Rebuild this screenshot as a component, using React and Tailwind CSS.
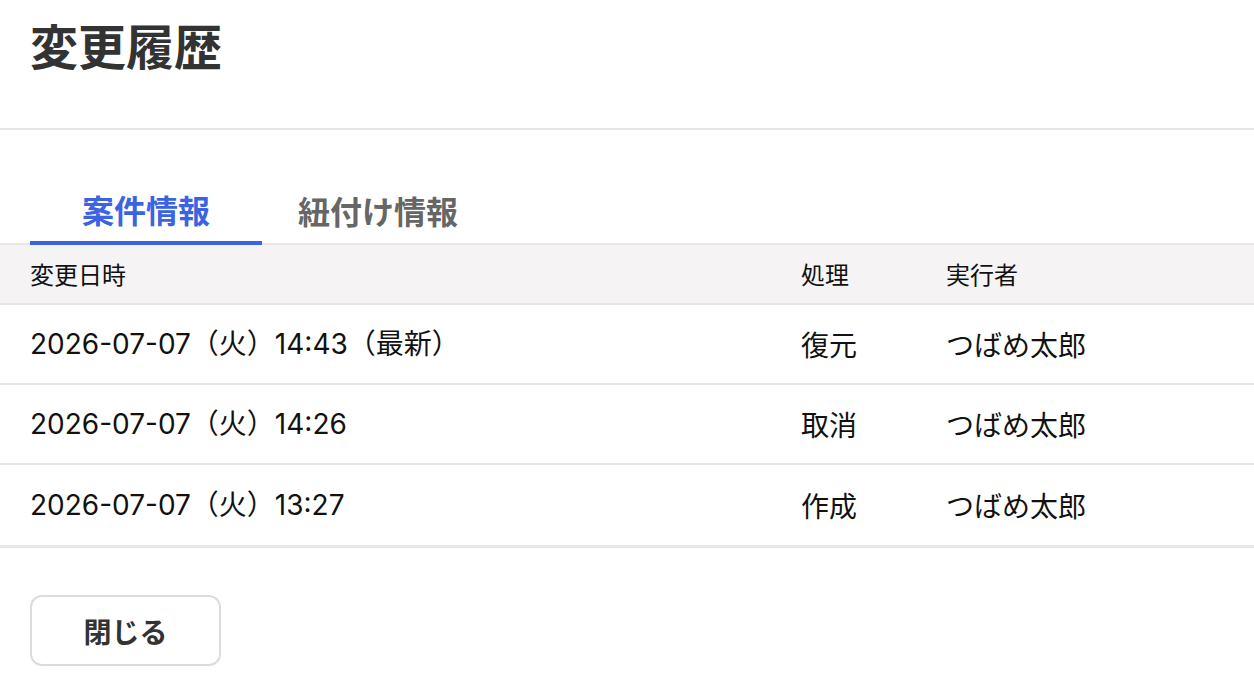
import React from "react";

const rows = [
  { date: "2026-07-07（火）14:43（最新）", action: "復元", user: "つばめ太郎" },
  { date: "2026-07-07（火）14:26", action: "取消", user: "つばめ太郎" },
  { date: "2026-07-07（火）13:27", action: "作成", user: "つばめ太郎" },
];

export default function App() {
  return (
    <div className="min-h-screen bg-white font-['Noto_Sans_CJK_JP','Noto_Sans',sans-serif]">
      <div className="h-[130px] border-b-2 border-[#e6e6e6] px-[30px] pt-[12px]">
        <h1 className="text-[48px] font-bold leading-[64px] text-[#333]">変更履歴</h1>
      </div>

      <div className="mt-[53px] flex border-b-2 border-[#e8e6e7] px-[30px]">
        <button className="-mb-[2px] w-[232px] border-b-4 border-[#3b63e3] pb-[6px] text-[32px] font-bold leading-[52px] text-[#3b63e3]">
          案件情報
        </button>
        <button className="w-[232px] pb-[6px] text-[32px] font-bold leading-[52px] text-[#666]">
          紐付け情報
        </button>
      </div>

      <div className="border-b-[3px] border-[#e6e6e6]">
        <div className="grid h-[60px] grid-cols-[771px_145px_1fr] items-center border-b-2 border-[#e6e6e6] bg-[#f5f3f4] text-[24px] text-[#111]">
          <div className="pl-[30px]">変更日時</div>
          <div className="pl-[30px]">処理</div>
          <div className="pl-[30px]">実行者</div>
        </div>
        {rows.map((r, i) => (
          <div
            key={i}
            className={
              "grid h-[80px] grid-cols-[771px_145px_1fr] items-center text-[28px] text-[#111] " +
              (i < rows.length - 1 ? "border-b-2 border-[#e6e6e6]" : "")
            }
          >
            <div className="pl-[30px] font-['Inter','Noto_Sans_CJK_JP',sans-serif]">{r.date}</div>
            <div className="pl-[30px]">{r.action}</div>
            <div className="pl-[30px]">{r.user}</div>
          </div>
        ))}
      </div>

      <div className="px-[30px] pt-[47px]">
        <button className="h-[71px] w-[191px] rounded-[12px] border-2 border-[#dcdcdc] bg-white text-[28px] font-bold text-[#333]">
          閉じる
        </button>
      </div>
    </div>
  );
}
